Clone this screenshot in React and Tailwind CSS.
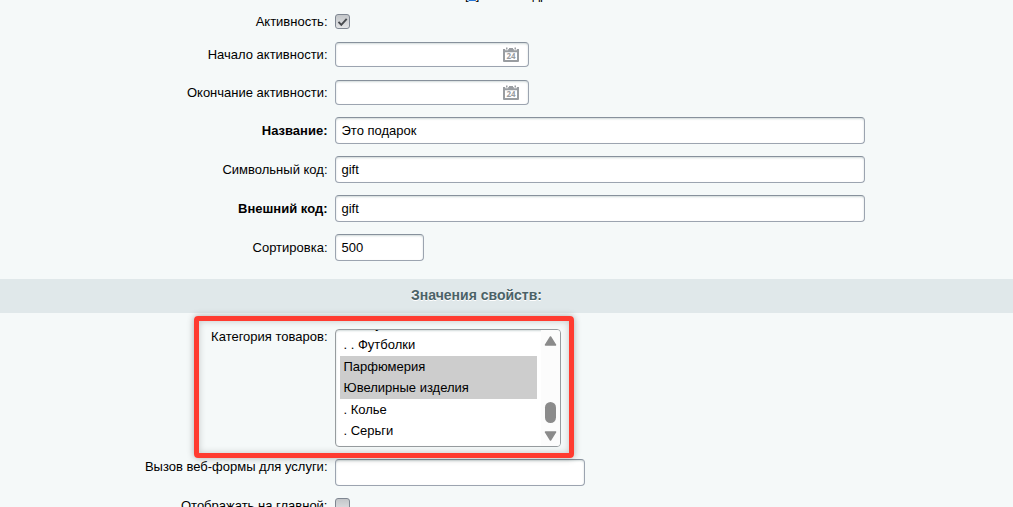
import clsx from "clsx";

const CATEGORIES = [
  { name: ". . Футболки" },
  { name: "Парфюмерия", selected: true },
  { name: "Ювелирные изделия", selected: true },
  { name: ". Колье" },
  { name: ". Серьги" },
];

// shared look of the text fields
const field =
  "flex items-center justify-between rounded-[4px] border border-[#9ca4b0] border-t-[#87919c] bg-white px-[5.5px] shadow-[inset_0_1px_2px_rgba(140,160,160,0.4)]";

function Row({ label, bold, className, children }) {
  return (
    <div className={clsx("flex gap-[7.5px]", className)}>
      <div
        className={clsx("w-[327.5px] shrink-0 text-right", bold && "font-bold")}
      >
        {label}
      </div>
      {children}
    </div>
  );
}

function Checkbox({ checked }) {
  return (
    <span className="flex h-[15px] w-[15px] shrink-0 items-center justify-center rounded-[3px] border border-[#7f8792] bg-linear-to-b from-[#c3c6c9] to-[#e3e5e7]">
      {checked && (
        <svg width="11" height="10" viewBox="0 0 11 10" fill="none">
          <path d="M1.5 4.8 4.3 7.8 9.7 1.8" stroke="#484b4f" strokeWidth="1.9" />
        </svg>
      )}
    </span>
  );
}

function CalendarIcon() {
  return (
    <svg width="16" height="15" viewBox="0 0 16 15" className="mr-[3.5px]">
      <path
        fill="#999da1"
        fillRule="evenodd"
        d="M0 2h2.2v1.3h3V2h5.6v1.3h3V2H16v12q0 .9-.9.9H.9q-.9 0-.9-.9ZM2 5.2v7.9h12V5.2Z"
      />
      <path fill="#999da1" d="M3 .4h1.5v2.2H3ZM11.5.4H13v2.2h-1.5ZM6 1h4v2H6Z" />
      <text
        x="8"
        y="12"
        textAnchor="middle"
        fill="#999da1"
        className="font-['Open_Sans'] text-[8px] font-bold"
      >
        24
      </text>
    </svg>
  );
}

function DateField() {
  return (
    <div className={clsx(field, "h-[25px] w-[194px]")}>
      <span />
      <CalendarIcon />
    </div>
  );
}

function CategoryList() {
  return (
    <div className="flex h-[118px] w-[226px] overflow-hidden rounded-[4px] border border-[#979c9f] bg-white shadow-[inset_0_1px_2px_rgba(140,160,160,0.4)]">
      <div className="ml-1 w-[197px] shrink-0">
        {/* option scrolled almost out of the list */}
        <div className="h-[4.5px] overflow-hidden pl-[3.5px]">
          <div className="-mt-[14px]">. . Обувь</div>
        </div>
        {CATEGORIES.map((c) => (
          <div
            key={c.name}
            className={clsx(
              "h-[21.5px] pl-[3.5px] pt-[0.5px] leading-[20px]",
              c.selected && "bg-[#cdcdcd]"
            )}
          >
            {c.name}
          </div>
        ))}
      </div>
      <div className="ml-1 flex flex-1 flex-col items-center bg-[#fcfcfc] pr-px">
        <svg width="13" height="10" viewBox="0 0 13 10" className="mt-[6px]">
          <path d="M6.5 1 11.5 9H1.5Z" fill="#8b8b8b" stroke="#8b8b8b" strokeWidth="1.5" strokeLinejoin="round" />
        </svg>
        <div className="mt-[56px] h-[21px] w-[11px] rounded-full bg-[#8b8b8b]" />
        <svg width="13" height="10" viewBox="0 0 13 10" className="mt-2">
          <path d="M6.5 9 11.5 1H1.5Z" fill="#8b8b8b" stroke="#8b8b8b" strokeWidth="1.5" strokeLinejoin="round" />
        </svg>
      </div>
    </div>
  );
}

export default function App() {
  return (
    <div className="relative h-[507px] w-[1013px] overflow-hidden bg-[#f5f9f9] font-['Liberation_Sans',Arial,sans-serif] text-[13px] leading-[16px] text-black">
      {/* bottom edge of the scrolled-off row */}
      <div className="flex h-2 items-start overflow-hidden pl-[465px]">
        <span className="-mt-[13px]">
          [<a className="text-[#2675d7] underline">5</a>]
        </span>
        <span className="-mt-[13px] ml-[53px]">др</span>
      </div>

      <Row label="Активность:" className="h-[27px] items-center">
        <Checkbox checked />
      </Row>
      <Row label="Начало активности:" className="h-[39px] items-center">
        <DateField />
      </Row>
      <Row label="Окончание активности:" className="h-[37px] items-center">
        <DateField />
      </Row>
      <Row label="Название:" bold className="h-[39px] items-center">
        <div className={clsx(field, "h-[27px] w-[530px]")}>Это подарок</div>
      </Row>
      <Row label="Символьный код:" className="h-[39px] items-center">
        <div className={clsx(field, "h-[27px] w-[530px]")}>gift</div>
      </Row>
      <Row label="Внешний код:" bold className="h-[39px] items-center">
        <div className={clsx(field, "h-[27px] w-[530px]")}>gift</div>
      </Row>
      <Row label="Сортировка:" className="h-[39px] items-center">
        <div className={clsx(field, "h-[27px] w-[89px]")}>500</div>
      </Row>

      <div className="mt-3 flex h-[34px] items-center justify-center bg-[#e0e8ea] pb-0.5 pr-[60px] text-[14px] font-bold text-[#4b6267] [text-shadow:0_1px_#fff]">
        Значения свойств:
      </div>

      <Row label="Категория товаров:" className="mt-4">
        <CategoryList />
      </Row>
      <Row label="Вызов веб-формы для услуги:" className="mt-3">
        <div className={clsx(field, "h-[27px] w-[250px]")} />
      </Row>
      <Row label="Отображать на главной:" className="mt-3">
        <Checkbox />
      </Row>

      {/* highlight frame */}
      <div className="absolute left-[194.4px] top-[315.5px] h-[142px] w-[380px] rounded-[4px] border-[5px] border-[#ff3b30] shadow-[0_0_7px_rgba(0,0,0,0.3),inset_0_0_7px_rgba(0,0,0,0.2)]" />
    </div>
  );
}
